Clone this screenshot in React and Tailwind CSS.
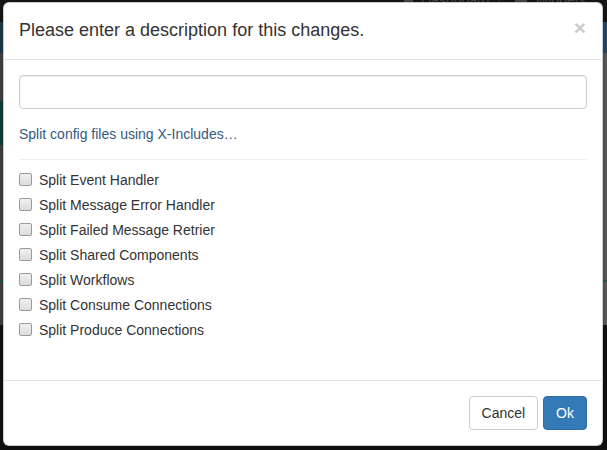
import React from "react";

const items = [
  "Split Event Handler",
  "Split Message Error Handler",
  "Split Failed Message Retrier",
  "Split Shared Components",
  "Split Workflows",
  "Split Consume Connections",
  "Split Produce Connections",
];

export default function App() {
  return (
    <div
      className="relative w-[607px] h-[450px] overflow-hidden bg-[#141414]"
      style={{ fontFamily: '"Liberation Sans", Arial, sans-serif' }}
    >
      {/* dimmed page behind the modal */}
      <div className="flex flex-col w-full">
        <div className="h-[22px] bg-[#171717] flex items-start">
          <div className="ml-[404px] -mt-[10px] flex items-center gap-[8px] text-[14px] text-[#4a4a4a]">
            <span className="w-[9px] h-[9px] bg-[#4a4a4a] inline-block" />
            <span>Dashboard</span>
            <span className="text-[#3a3a3a]">|</span>
            <span className="w-[12px] h-[8px] bg-[#4a4a4a] inline-block ml-[6px]" />
            <span>Widgets</span>
          </div>
        </div>
        <div className="h-[31px] bg-gradient-to-r from-[#21445a] to-[#2b5676]" />
        <div className="h-[272px] bg-gradient-to-r from-[#4b4b4b] to-[#686868] flex flex-col">
          <div className="h-[48px]" />
          <div className="h-[44px] bg-gradient-to-r from-[#0e4848] via-[#4b4b4b] to-[#686868]" />
          <div className="h-[135px]" />
          <div className="h-[2px] bg-[#2f5f5f]" />
        </div>
        <div className="flex-1 bg-[#141414]" />
      </div>

      {/* modal */}
      <div className="absolute left-[3px] top-[2px] w-[600px] h-[444px] bg-white border border-black/20 rounded-[6px] shadow-[0_5px_15px_rgba(0,0,0,0.5)] flex flex-col">
        <div className="flex items-start justify-between px-[15px] pt-[15px] pb-[15px] border-b border-[#e5e5e5]">
          <h4 className="text-[18px] leading-[25.7px] text-[#333]">
            Please enter a description for this changes.
          </h4>
          <span className="text-[21px] font-bold leading-none text-black opacity-20 -mt-[1px] mr-[1px]">
            ×
          </span>
        </div>

        <div className="h-[321px] px-[15px] pt-[15px] flex flex-col">
          <div className="h-[34px] w-full border border-[#ccc] rounded-[4px] shadow-[inset_0_1px_1px_rgba(0,0,0,0.075)]" />
          <p className="mt-[15px] text-[14px] leading-[20px] text-[#33597f]">
            Split config files using X-Includes…
          </p>
          <div className="mt-[15px] border-t border-[#eee]" />
          <div className="mt-[10px] flex flex-col gap-[5px]">
            {items.map((t) => (
              <div key={t} className="flex items-center h-[20px]">
                <span className="w-[13px] h-[13px] rounded-[2px] border border-[#9a9a9a] bg-gradient-to-b from-[#f0f0f0] to-[#dcdcdc] inline-block" />
                <span className="ml-[7px] text-[14px] leading-[20px] text-[#333]">{t}</span>
              </div>
            ))}
          </div>
        </div>

        <div className="border-t border-[#e5e5e5] p-[15px] flex justify-end gap-[5px]">
          <button className="h-[34px] px-[12px] border border-[#ccc] rounded-[4px] bg-white text-[14px] text-[#333]">
            Cancel
          </button>
          <button className="h-[34px] px-[12px] border border-[#2e6da4] rounded-[4px] bg-[#337ab7] text-[14px] text-white">
            Ok
          </button>
        </div>
      </div>
    </div>
  );
}
